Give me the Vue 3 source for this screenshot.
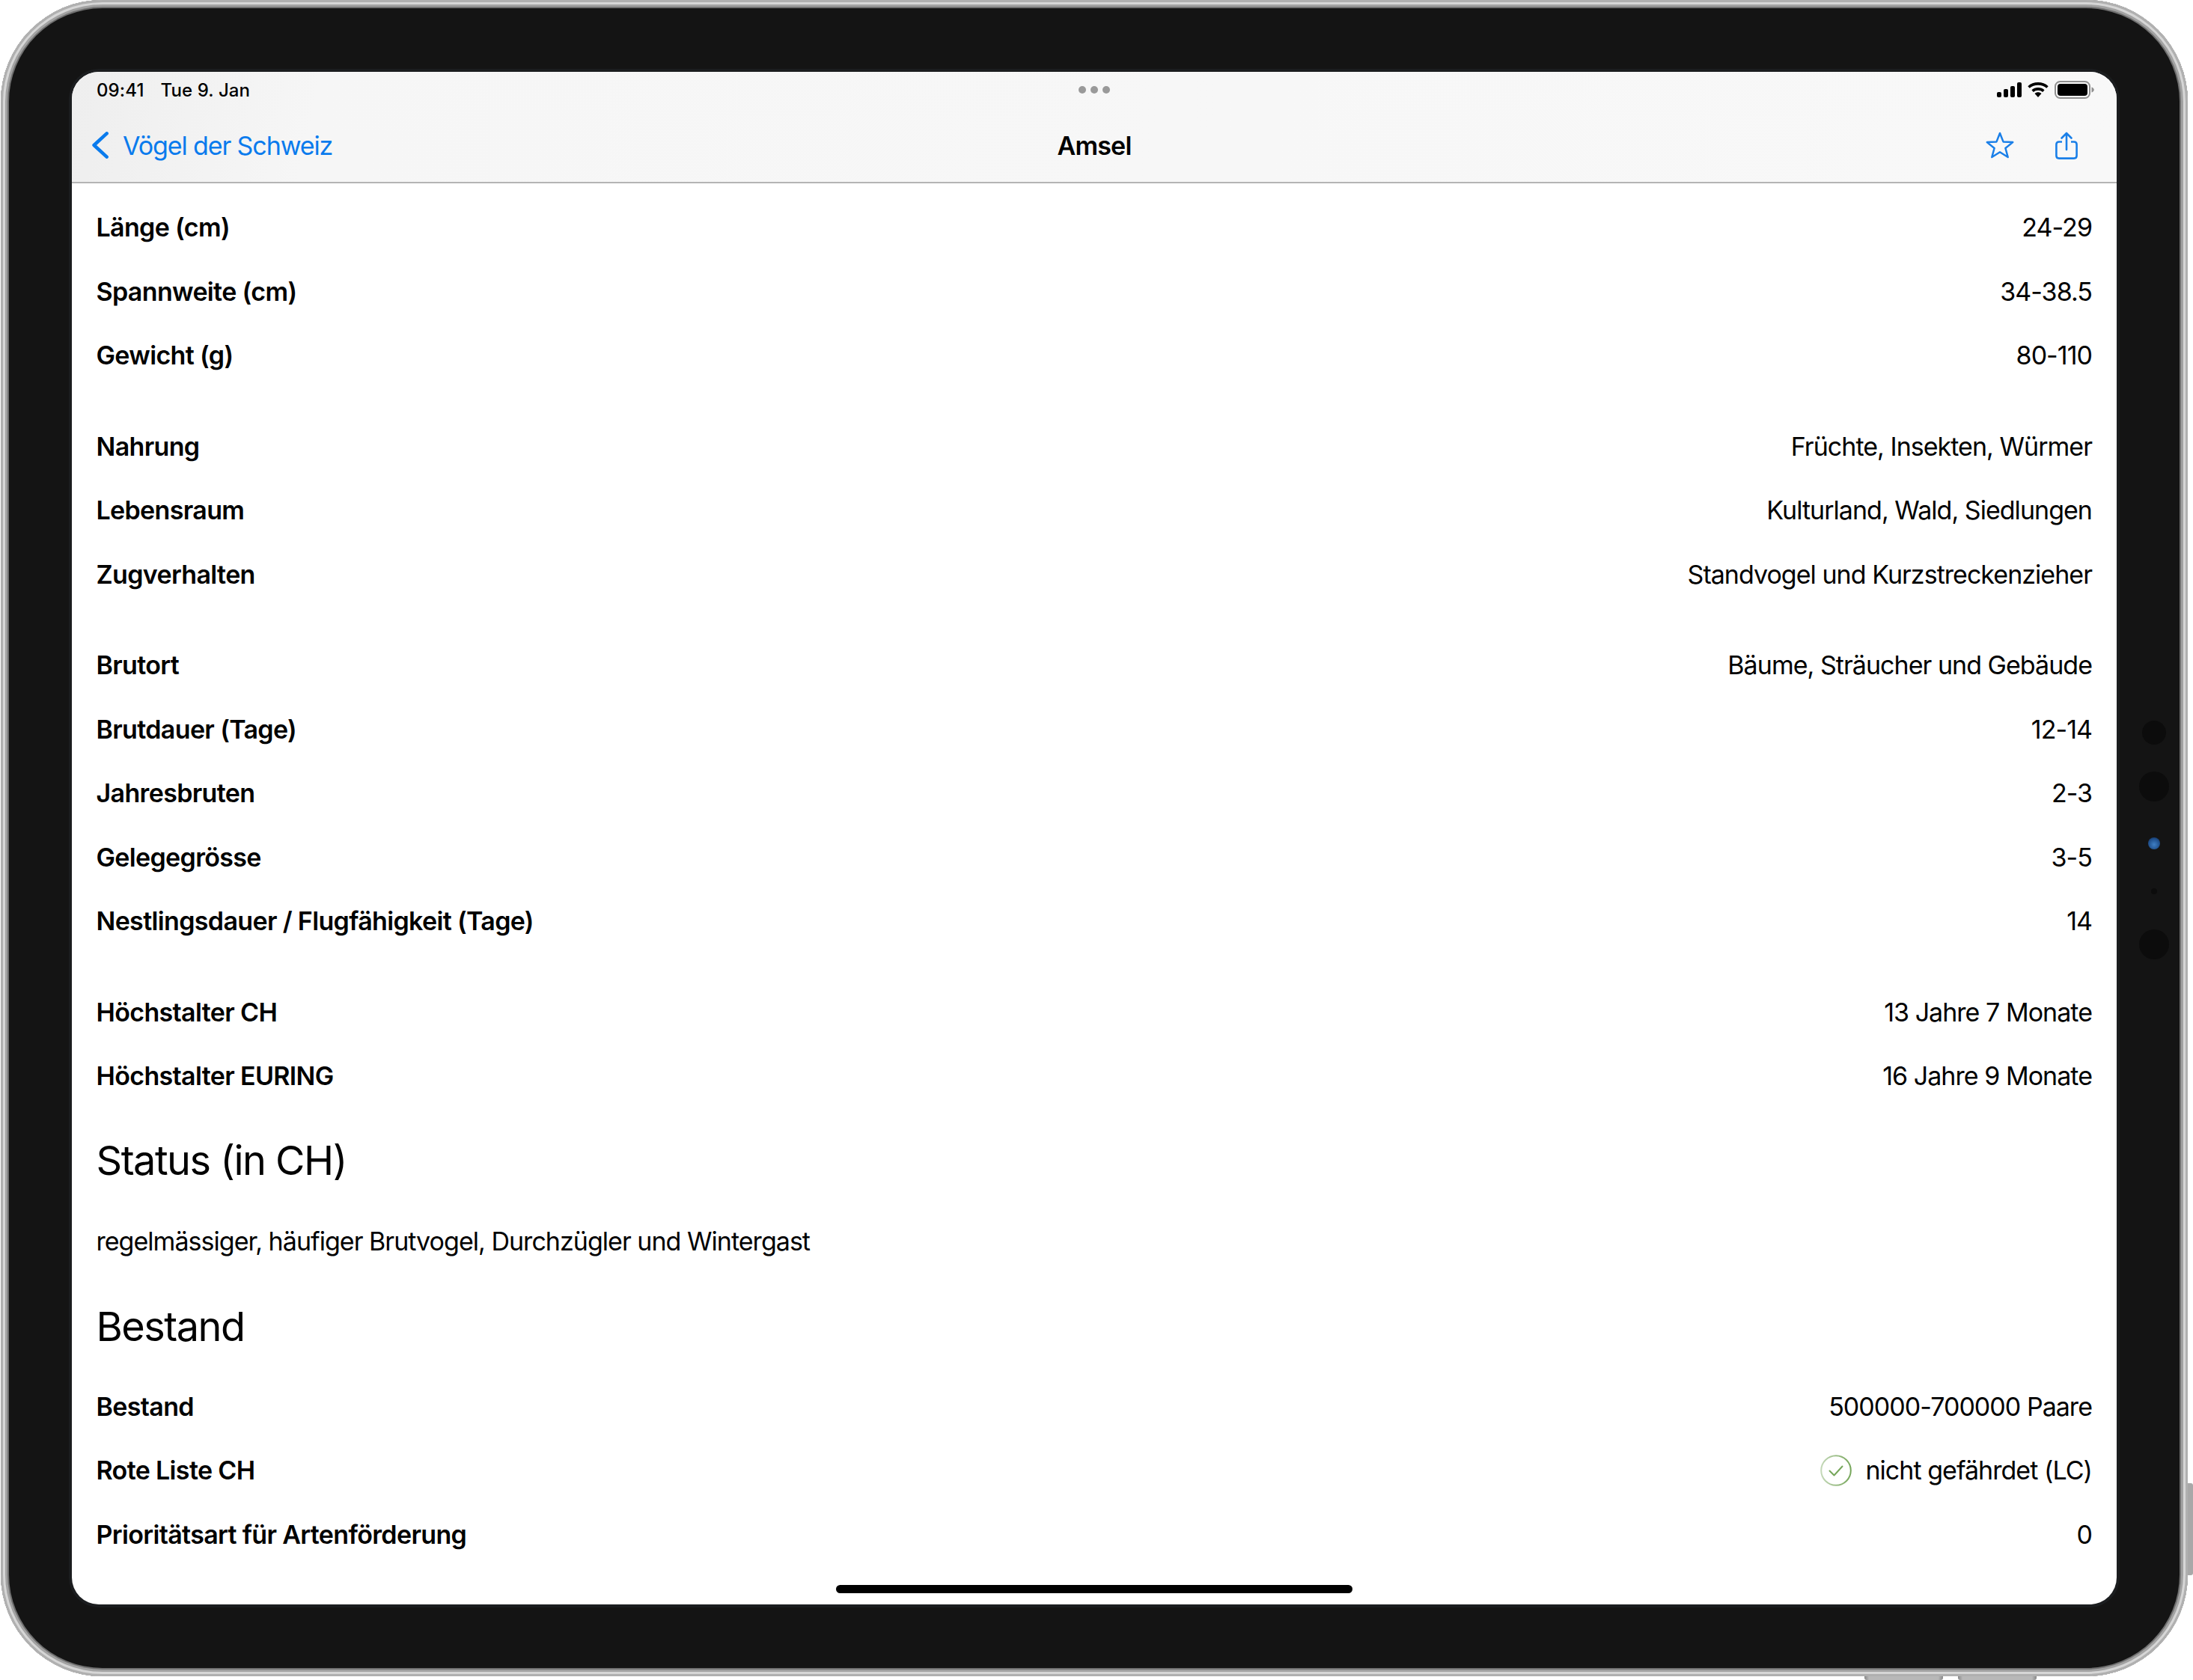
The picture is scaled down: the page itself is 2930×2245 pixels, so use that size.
<template>
  <div class="stage">
    <div class="device">
      <div class="screen">
        <header class="topbar">
          <div class="status">
            <div class="clock"><span>09:41</span><span>Tue 9. Jan</span></div>
            <div class="dots"><i></i><i></i><i></i></div>
            <div class="indicators">
              <svg width="33" height="20" viewBox="0 0 33 20">
                <rect x="0" y="13" width="6" height="7" rx="2" />
                <rect x="9" y="9" width="6" height="11" rx="2" />
                <rect x="18" y="5" width="6" height="15" rx="2" />
                <rect x="27" y="0" width="6" height="20" rx="2" />
              </svg>
              <svg width="28" height="20" viewBox="0 0 28 20">
                <path d="M1.5 6.5C8.5 .3 19.5 .3 26.5 6.5" fill="none" stroke="#000" stroke-width="3.6" />
                <path d="M6.6 11.6C10.8 8 17.2 8 21.4 11.6" fill="none" stroke="#000" stroke-width="3.6" />
                <path d="M9.5 15 14 20 18.5 15C16 12.8 12 12.8 9.5 15Z" />
              </svg>
              <svg width="53" height="24" viewBox="0 0 53 24">
                <rect x="1" y="1" width="46" height="22" rx="6.5" fill="none" stroke="#8f8f8f" stroke-width="2" />
                <rect x="4" y="4" width="40" height="16" rx="4" />
                <path d="M49.5 8.5C51.5 9.2 52.8 10.4 52.8 12S51.5 14.8 49.5 15.5Z" fill="#8f8f8f" />
              </svg>
            </div>
          </div>
          <nav class="navbar">
            <a class="back">
              <svg width="22" height="36" viewBox="0 0 22 36">
                <path d="M19.6 2.4 2.6 18 19.6 33.6" fill="none" stroke="#0a7bed" stroke-width="4.6" stroke-linecap="round" stroke-linejoin="round" />
              </svg>
              <span>Vögel der Schweiz</span>
            </a>
            <h1 class="title">Amsel</h1>
            <div class="actions">
              <svg width="38" height="36" viewBox="0 0 38 36">
                <path d="M19 2 23.5 13.4 36.2 14.1 26.4 22 29.7 34 19 27.3 8.3 34 11.6 22 1.8 14.1 14.5 13.4Z" fill="none" stroke="#1a7fe8" stroke-width="2.5" stroke-linejoin="round" />
              </svg>
              <svg width="30" height="37" viewBox="0 0 30 37">
                <path d="M9 13.5H5Q1.4 13.5 1.4 17V32Q1.4 35.6 5 35.6H25Q28.6 35.6 28.6 32V17Q28.6 13.5 25 13.5H21" fill="none" stroke="#1a7fe8" stroke-width="2.6" />
                <path d="M15 24V2.5M8.5 8.5 15 2 21.5 8.5" fill="none" stroke="#1a7fe8" stroke-width="2.6" stroke-linecap="round" stroke-linejoin="round" />
              </svg>
            </div>
          </nav>
        </header>

        <main class="content">
          <section v-for="(group, g) in groups" :key="g" class="group">
            <div v-for="row in group" :key="row.label" class="row">
              <span class="label">{{ row.label }}</span>
              <span class="value">{{ row.value }}</span>
            </div>
          </section>

          <h2 class="heading">Status (in CH)</h2>
          <p class="text">regelmässiger, häufiger Brutvogel, Durchzügler und Wintergast</p>

          <h2 class="heading second">Bestand</h2>
          <div class="row">
            <span class="label">Bestand</span>
            <span class="value">500000-700000 Paare</span>
          </div>
          <div class="row">
            <span class="label">Rote Liste CH</span>
            <span class="value with-icon">
              <svg width="44" height="42" viewBox="0 0 44 42">
                <defs>
                  <linearGradient id="ring" x1="0" y1="0" x2="1" y2="0">
                    <stop offset="0" stop-color="#c4d8b8" />
                    <stop offset="1" stop-color="#76a65a" />
                  </linearGradient>
                </defs>
                <circle cx="22" cy="21" r="19.8" fill="none" stroke="url(#ring)" stroke-width="2" />
                <path d="M13.5 21.5 19.5 27.5 30.5 15.5" fill="none" stroke="#76a65a" stroke-width="2" stroke-linecap="round" stroke-linejoin="round" />
              </svg>
              nicht gefährdet (LC)
            </span>
          </div>
          <div class="row">
            <span class="label">Prioritätsart für Artenförderung</span>
            <span class="value">0</span>
          </div>
        </main>

        <div class="home-bar"></div>
      </div>

      <div class="sensors">
        <i class="s1"></i>
        <i class="s2"></i>
        <i class="s3"></i>
        <i class="s4"></i>
        <i class="s5"></i>
      </div>
    </div>
    <div class="btn-side"></div>
    <div class="btn-bottom one"></div>
    <div class="btn-bottom two"></div>
  </div>
</template>

<script setup>
const groups = [
  [
    { label: 'Länge (cm)', value: '24-29' },
    { label: 'Spannweite (cm)', value: '34-38.5' },
    { label: 'Gewicht (g)', value: '80-110' }
  ],
  [
    { label: 'Nahrung', value: 'Früchte, Insekten, Würmer' },
    { label: 'Lebensraum', value: 'Kulturland, Wald, Siedlungen' },
    { label: 'Zugverhalten', value: 'Standvogel und Kurzstreckenzieher' }
  ],
  [
    { label: 'Brutort', value: 'Bäume, Sträucher und Gebäude' },
    { label: 'Brutdauer (Tage)', value: '12-14' },
    { label: 'Jahresbruten', value: '2-3' },
    { label: 'Gelegegrösse', value: '3-5' },
    { label: 'Nestlingsdauer / Flugfähigkeit (Tage)', value: '14' }
  ],
  [
    { label: 'Höchstalter CH', value: '13 Jahre 7 Monate' },
    { label: 'Höchstalter EURING', value: '16 Jahre 9 Monate' }
  ]
];
</script>

<style>
html,
body {
  background: #fff;
}
</style>

<style scoped>
.stage {
  position: relative;
  width: 2930px;
  height: 2245px;
  overflow: hidden;
  background: #fff;
  font-family: Inter, "Liberation Sans", sans-serif;
  color: #000;
}

.device {
  position: relative;
  z-index: 1;
  box-sizing: border-box;
  width: 2922px;
  height: 2240px;
  margin-left: 1px;
  padding: 96px 95px;
  border-radius: 136px;
  background: #141414;
  box-shadow: inset 0 0 0 3px #b0b0b0, inset 0 0 0 6px #d6d6d6, inset 0 0 0 9px #a2a2a2, inset 0 0 0 11px #707070;
}

.screen {
  position: relative;
  height: 2048px;
  border-radius: 36px;
  overflow: hidden;
  background: #fff;
  box-shadow: 0 0 0 4px #1b1d1f;
}

.topbar {
  height: 149px;
  box-sizing: border-box;
  border-bottom: 2px solid #b4b4b4;
  background: linear-gradient(100deg, #eeeeee 0, #f6f6f6 12%, #f8f8f8 100%);
}

.status {
  display: grid;
  grid-template-columns: 1fr auto 1fr;
  align-items: center;
  height: 48px;
  padding: 0 33px;
}

.clock {
  display: flex;
  gap: 22px;
  font-size: 24px;
  font-weight: 500;
  letter-spacing: 0.1px;
}

.dots {
  display: flex;
  gap: 6px;
}

.dots i {
  width: 10px;
  height: 10px;
  border-radius: 50%;
  background: #999;
}

.indicators {
  display: flex;
  justify-content: flex-end;
  align-items: center;
  gap: 8px;
  margin-right: -3px;
}

.navbar {
  display: grid;
  grid-template-columns: 1fr auto 1fr;
  align-items: center;
  height: 100px;
  padding: 0 27px;
}

.back {
  display: flex;
  align-items: center;
  gap: 19px;
  font-size: 34px;
  letter-spacing: -1.1px;
  color: #0a7bed;
}

.title {
  margin: 0;
  font-size: 34px;
  font-weight: 600;
  letter-spacing: -0.8px;
}

.actions {
  display: flex;
  justify-content: flex-end;
  align-items: center;
  gap: 55px;
  padding-right: 25px;
}

.content {
  padding: 16px 33px 0 32.5px;
}

.group + .group {
  margin-top: 35.6px;
}

.row {
  display: flex;
  justify-content: space-between;
  align-items: center;
  height: 85.6px;
  font-size: 34px;
  letter-spacing: -0.97px;
}

.label {
  font-weight: 600;
  letter-spacing: -0.65px;
}

.with-icon {
  display: flex;
  align-items: center;
  gap: 17px;
}

.heading {
  margin: 36px 0 0;
  font-size: 54px;
  font-weight: 400;
  line-height: 68px;
  letter-spacing: -1.5px;
}

.second {
  margin-top: 60px;
}

.text {
  margin: 0;
  padding: 53px 0 0;
  font-size: 34px;
  line-height: 41px;
  letter-spacing: -0.97px;
}

.heading.second + .row {
  margin-top: 30px;
}

.home-bar {
  position: absolute;
  left: 1021px;
  bottom: 15px;
  width: 690px;
  height: 11px;
  border-radius: 6px;
  background: #000;
}

.sensors i {
  position: absolute;
  border-radius: 50%;
  background: #0c0c0c;
  transform: translate(-50%, -50%);
  left: 2877px;
}

.sensors .s1 { top: 979px; width: 32px; height: 32px; }
.sensors .s2 { top: 1051px; width: 40px; height: 40px; }
.sensors .s3 {
  top: 1127px;
  width: 16px;
  height: 16px;
  background: radial-gradient(circle at 50% 60%, #3f7fc4 0, #1f4f8c 60%, #0f2240 100%);
}
.sensors .s4 { top: 1191px; width: 8px; height: 8px; }
.sensors .s5 { top: 1262px; width: 40px; height: 40px; }

.btn-side {
  position: absolute;
  left: 2920px;
  top: 1982px;
  width: 10px;
  height: 123px;
  border-radius: 3px;
  background: #a8a8a8;
}

.btn-bottom {
  position: absolute;
  top: 2234px;
  width: 105px;
  height: 11px;
  border-radius: 3px;
  background: linear-gradient(90deg, #888 0, #b8b8b8 6%, #b8b8b8 94%, #888 100%);
}

.btn-bottom.one { left: 2491px; }
.btn-bottom.two { left: 2616px; }
</style>
